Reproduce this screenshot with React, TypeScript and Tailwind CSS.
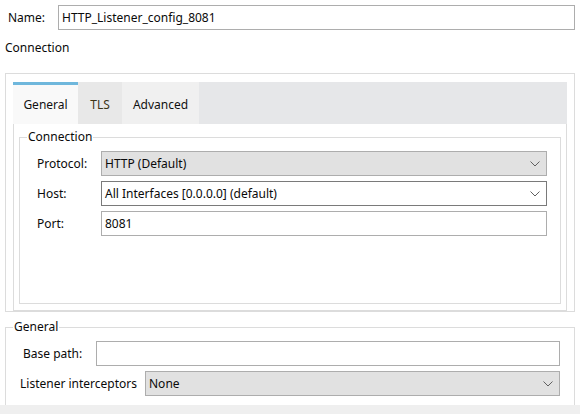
import type { ReactNode } from 'react';

const line = 'border-[#dcdcdc]';

function Chevron() {
  return (
    <svg width="10" height="6" viewBox="0 0 10 6" className="shrink-0">
      <path d="M0.5 0.5 L5 5 L9.5 0.5" fill="none" stroke="#606060" strokeWidth="1" />
    </svg>
  );
}

function Combo({ value, gray, focused, className = '' }: { value: string; gray?: boolean; focused?: boolean; className?: string }) {
  return (
    <div
      className={`h-[25px] flex items-center justify-between pl-[3px] pr-[6px] border ${
        focused ? 'border-[#7a7a7a]' : 'border-[#adadad]'
      } ${gray ? 'bg-[#e1e1e1]' : 'bg-white'} ${className}`}
    >
      <span>{value}</span>
      <Chevron />
    </div>
  );
}

function Field({ value = '', className = '' }: { value?: string; className?: string }) {
  return (
    <div className={`h-[25px] flex items-center pl-[3px] border border-[#adadad] bg-white ${className}`}>
      {value}
    </div>
  );
}

function Group({ label, className = '', children }: { label: string; className?: string; children: ReactNode }) {
  return (
    <div className={`relative border ${line} ${className}`}>
      <span className="absolute left-[7px] -top-[10px] px-[1px] bg-white leading-[18px]">{label}</span>
      {children}
    </div>
  );
}

export default function App() {
  const tabs = [
    { nombre: 'General', w: 'w-[65px]', cls: 'bg-[#f9f9f9] border-[#6fb7dc] text-[#111]' },
    { nombre: 'TLS', w: 'w-[44px]', cls: 'bg-[#e8e8e8] border-transparent text-[#3d3416]' },
    { nombre: 'Advanced', w: 'w-[77px]', cls: 'bg-[#f0f0f0] border-transparent text-[#111]' },
  ];

  return (
    <div className="w-[580px] h-[414px] bg-white flex flex-col overflow-hidden text-[12px] leading-[16px] text-[#0a0a0a] font-['Noto_Sans','Liberation_Sans',sans-serif]">
      {/* nombre */}
      <div className="flex items-center pt-[5px] pl-[8px]">
        <span className="w-[50px]">Name:</span>
        <Field value="HTTP_Listener_config_8081" className="w-[517px]" />
      </div>

      <div className="pl-[5px] mt-[9px] leading-[18px]">Connection</div>

      {/* panel con pestañas */}
      <div className={`ml-[5px] mt-[16px] w-[570px] h-[239px] border ${line} pt-[8px] px-[7px]`}>
        <div className="w-[554px] h-[229px] flex flex-col">
          <div className="h-[42px] flex bg-[#e6e7e9]">
            {tabs.map(t => (
              <div key={t.nombre} className={`${t.w} h-full flex items-center justify-center border-t-[3px] ${t.cls}`}>
                {t.nombre}
              </div>
            ))}
          </div>
          <div className={`flex-1 border-x border-b ${line} bg-white pt-[13px] px-[5px] pb-[6px]`}>
            <Group label="Connection" className="h-[167px] pt-[13px] pl-[17px] pr-[13px]">
              <div className="flex flex-col gap-[5px]">
                <div className="flex items-center">
                  <span className="w-[64px]">Protocol:</span>
                  <Combo value="HTTP (Default)" gray className="flex-1" />
                </div>
                <div className="flex items-center">
                  <span className="w-[64px]">Host:</span>
                  <Combo value="All Interfaces [0.0.0.0] (default)" focused className="flex-1" />
                </div>
                <div className="flex items-center">
                  <span className="w-[64px]">Port:</span>
                  <Field value="8081" className="flex-1" />
                </div>
              </div>
            </Group>
          </div>
        </div>
      </div>

      {/* general */}
      <div className={`relative ml-[5px] mt-[15px] w-[570px] h-[78px] border-t border-x ${line} pt-[13px] pr-[14px]`}>
        <span className="absolute left-[7px] -top-[10px] px-[1px] bg-white leading-[18px]">General</span>
        <div className="flex flex-col gap-[5px]">
          <div className="flex items-center pl-[17px]">
            <span className="w-[73px]">Base path:</span>
            <Field className="flex-1" />
          </div>
          <div className="flex items-center pl-[14px]">
            <span className="w-[125px]">Listener interceptors</span>
            <Combo value="None" gray className="flex-1" />
          </div>
        </div>
      </div>

      <div className="h-[9px] bg-[#efefef]" />
    </div>
  );
}
